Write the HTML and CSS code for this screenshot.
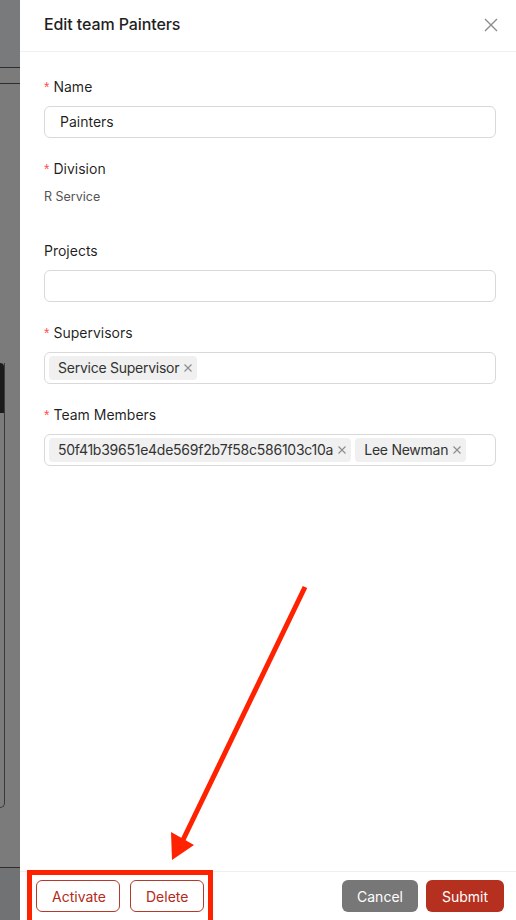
FILE: index.html
```html
<!DOCTYPE html>
<html lang="en">
<head>
<meta charset="UTF-8">
<meta name="viewport" content="width=device-width, initial-scale=1.0">
<title>Edit team Painters</title>
<link rel="stylesheet" href="styles.css">
</head>
<body>
<div class="backdrop">
    <div class="bd-head"></div>
    <div class="bd-tabs"></div>
    <div class="bd-space"></div>
    <div class="bd-card"><div class="bd-card-head"></div></div>
    <div class="bd-fill"></div>
    <div class="bd-foot"></div>
</div>

<div class="drawer">
    <div class="drawer-header">
        <span class="drawer-title">Edit team Painters</span>
        <svg class="close" width="14" height="14" viewBox="0 0 14 14"><path d="M1 1L13 13M13 1L1 13" stroke="#8c8c8c" stroke-width="1.4" fill="none"/></svg>
    </div>

    <div class="drawer-body">
        <div class="field">
            <label class="required">Name</label>
            <div class="input">Painters</div>
        </div>
        <div class="field">
            <label class="required">Division</label>
            <div class="static">R Service</div>
        </div>
        <div class="field">
            <label>Projects</label>
            <div class="input"></div>
        </div>
        <div class="field">
            <label class="required">Supervisors</label>
            <div class="select">
                <span class="tag">Service Supervisor<svg class="tag-x" width="8" height="8" viewBox="0 0 8 8"><path d="M0.5 0.5L7.5 7.5M7.5 0.5L0.5 7.5" stroke="#8c8c8c" stroke-width="1.1" fill="none"/></svg></span>
            </div>
        </div>
        <div class="field">
            <label class="required">Team Members</label>
            <div class="select">
                <span class="tag">50f41b39651e4de569f2b7f58c586103c10a<svg class="tag-x" width="8" height="8" viewBox="0 0 8 8"><path d="M0.5 0.5L7.5 7.5M7.5 0.5L0.5 7.5" stroke="#8c8c8c" stroke-width="1.1" fill="none"/></svg></span>
                <span class="tag">Lee Newman<svg class="tag-x" width="8" height="8" viewBox="0 0 8 8"><path d="M0.5 0.5L7.5 7.5M7.5 0.5L0.5 7.5" stroke="#8c8c8c" stroke-width="1.1" fill="none"/></svg></span>
            </div>
        </div>
    </div>

    <div class="drawer-footer">
        <div class="btn-group">
            <button class="btn btn-outline">Activate</button>
            <button class="btn btn-outline">Delete</button>
        </div>
        <div class="btn-group right">
            <button class="btn btn-cancel">Cancel</button>
            <button class="btn btn-submit">Submit</button>
        </div>
    </div>
</div>

<svg class="annotation" width="516" height="920" viewBox="0 0 516 920">
    <line x1="305" y1="587" x2="182" y2="842" stroke="#ff2200" stroke-width="5"/>
    <polygon points="171,832 194,845 172,860" fill="#ff2200"/>
    <rect x="29.5" y="872.5" width="181" height="50" fill="none" stroke="#ff2200" stroke-width="5"/>
</svg>
</body>
</html>
```

FILE: styles.css
```css
body {
    margin: 0;
    display: flex;
    height: 920px;
    overflow: hidden;
    font-family: Inter, "Noto Sans", sans-serif;
    color: rgba(0, 0, 0, 0.88);
    position: relative;
}

/* dimmed page behind the drawer */
.backdrop {
    width: 20px;
    flex-shrink: 0;
    display: flex;
    flex-direction: column;
    background-color: #7b7b7b;
}

.bd-head {
    height: 67px;
    background-color: #787a7c;
    border-bottom: 1px solid #2e2e2e;
}

.bd-tabs {
    height: 15px;
    border-bottom: 1px solid #2e2e2e;
}

.bd-space {
    height: 279px;
}

.bd-card {
    width: 4px;
    height: 444px;
    border-right: 1px solid #3a3a3a;
    border-bottom: 1px solid #3a3a3a;
    border-radius: 0 0 8px 0;
}

.bd-card-head {
    height: 50px;
    background-color: #1b1b1b;
    border-radius: 0 6px 0 0;
}

.bd-fill {
    flex-grow: 1;
}

.bd-foot {
    height: 52px;
    background-color: #707274;
    border-top: 1px solid #2e2e2e;
}

.drawer {
    flex-grow: 1;
    display: flex;
    flex-direction: column;
    background-color: #fff;
}

.drawer-header {
    height: 47px;
    padding: 0 18px 4px 24px;
    display: flex;
    align-items: center;
    justify-content: space-between;
    border-bottom: 1px solid #f0f0f0;
}

.drawer-title {
    font-size: 16px;
    font-weight: 500;
    color: #1f1f1f;
    letter-spacing: -0.1px;
}

.close {
    display: block;
    margin-top: 2px;
}

.drawer-body {
    flex-grow: 1;
    padding: 24px 20px 0 24px;
}

.field {
    margin-bottom: 20px;
}

.field label {
    display: block;
    height: 22px;
    line-height: 22px;
    font-size: 14px;
    margin-bottom: 8px;
}

.field label.required::before {
    content: "*";
    color: #ff4d4f;
    margin-right: 4px;
    font-size: 14px;
    font-family: SimSun, sans-serif;
}

.input {
    height: 30px;
    line-height: 30px;
    border: 1px solid #d9d9d9;
    border-radius: 6px;
    padding: 0 15px;
    font-size: 14px;
}

.static {
    height: 32px;
    font-size: 12.5px;
    line-height: 18px;
    color: #555;
}

.select {
    height: 30px;
    border: 1px solid #d9d9d9;
    border-radius: 6px;
    padding: 0 4px;
    display: flex;
    align-items: center;
    gap: 4px;
}

.tag {
    height: 24px;
    line-height: 24px;
    background-color: #f0f0f0;
    border-radius: 4px;
    padding: 0 5px 0 9px;
    font-size: 14px;
    letter-spacing: -0.25px;
    color: #333;
    display: flex;
    align-items: center;
    white-space: nowrap;
}

.tag-x {
    display: block;
    margin-left: 5px;
}

.drawer-footer {
    height: 48px;
    border-top: 1px solid #f0f0f0;
    padding: 0 12px 0 16px;
    display: flex;
    align-items: center;
    justify-content: space-between;
}

.btn-group {
    display: flex;
    gap: 10px;
}

.btn-group.right {
    gap: 8px;
}

.btn {
    height: 32px;
    padding: 0 15px;
    border-radius: 6px;
    font-family: inherit;
    font-size: 14px;
    cursor: pointer;
}

.btn-outline {
    background: #fff;
    border: 1px solid #b53a2a;
    color: #b32b1a;
}

.btn-outline:first-child {
    width: 84px;
}

.btn-outline:last-child {
    width: 74px;
}

.btn-cancel {
    background-color: #777;
    border: none;
    color: #fff;
    width: 76px;
}

.btn-submit {
    background-color: #b5301e;
    border: none;
    color: #fff;
    width: 78px;
}

.annotation {
    position: absolute;
    top: 0;
    left: 0;
    pointer-events: none;
}
```
